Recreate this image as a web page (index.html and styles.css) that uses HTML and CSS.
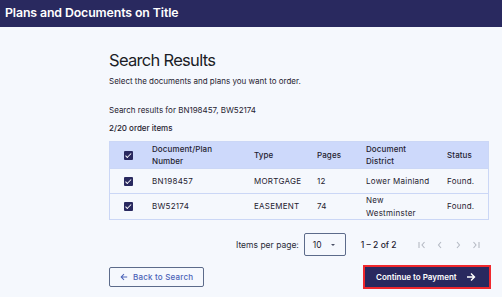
FILE: index.html
```html
<!DOCTYPE html>
<html>
<head>
  <title>Plans and Documents on Title</title>
  <meta charset="UTF-8">
  <link rel="stylesheet" href="styles.css">
</head>
<body>
  <div class="topbar">Plans and Documents on Title</div>

  <div class="container">
    <h1>Search Results</h1>
    <p class="subtitle">Select the documents and plans you want to order.</p>

    <p class="query">Search results for BN198457, BW52174</p>
    <p class="count">2/20 order items</p>

    <table class="results">
      <thead>
        <tr>
          <th class="col-check"><span class="checkbox"></span></th>
          <th class="col-doc">Document/Plan<br>Number</th>
          <th class="col-type">Type</th>
          <th class="col-pages">Pages</th>
          <th class="col-district">Document<br>District</th>
          <th class="col-status">Status</th>
        </tr>
      </thead>
      <tbody>
        <tr>
          <td class="col-check"><span class="checkbox"></span></td>
          <td>BN198457</td>
          <td>MORTGAGE</td>
          <td>12</td>
          <td>Lower Mainland</td>
          <td>Found.</td>
        </tr>
        <tr>
          <td class="col-check"><span class="checkbox"></span></td>
          <td>BW52174</td>
          <td>EASEMENT</td>
          <td>74</td>
          <td>New<br>Westminster</td>
          <td>Found.</td>
        </tr>
      </tbody>
    </table>

    <div class="paginator">
      <span class="per-page">Items per page:</span>
      <div class="select">
        <span>10</span>
        <span class="caret"></span>
      </div>
      <span class="range">1 – 2 of 2</span>
      <div class="pager-icons">
        <svg width="10" height="10" viewBox="0 0 10 10" fill="none" stroke="#b5bac4" stroke-width="1.1"><path d="M2 2v6M7.5 2L5 5l2.5 3"/></svg>
        <svg width="10" height="10" viewBox="0 0 10 10" fill="none" stroke="#b5bac4" stroke-width="1.1"><path d="M6 2L3.5 5 6 8"/></svg>
        <svg width="10" height="10" viewBox="0 0 10 10" fill="none" stroke="#b5bac4" stroke-width="1.1"><path d="M4 2l2.5 3L4 8"/></svg>
        <svg width="10" height="10" viewBox="0 0 10 10" fill="none" stroke="#b5bac4" stroke-width="1.1"><path d="M2.5 2L5 5 2.5 8M8 2v6"/></svg>
      </div>
    </div>

    <div class="actions">
      <button class="btn-back">
        <svg width="8" height="8" viewBox="0 0 10 10" fill="none" stroke="currentColor" stroke-width="1.3"><path d="M9 5H1.5M5 1.5L1.5 5 5 8.5"/></svg>
        Back to Search
      </button>
      <button class="btn-continue">
        Continue to Payment
        <svg width="10" height="10" viewBox="0 0 10 10" fill="none" stroke="currentColor" stroke-width="1.4"><path d="M1 5h7.5M5 1.5L8.5 5 5 8.5"/></svg>
      </button>
    </div>
  </div>
</body>
</html>
```

FILE: styles.css
```css
body {
  font-family: Inter, "Noto Sans", sans-serif;
  margin: 0;
  padding: 0;
  background-color: #f5f8fd;
  color: #1f2230;
}

.topbar {
  height: 27px;
  line-height: 26px;
  background-color: #29295f;
  color: #ffffff;
  font-size: 12.3px;
  font-weight: 600;
  padding-left: 5px;
  letter-spacing: -0.1px;
}

.container {
  width: 380px;
  margin-left: 109px;
  padding-top: 23px;
}

h1 {
  margin: 0;
  font-size: 16.5px;
  font-weight: 400;
  line-height: 21px;
  letter-spacing: -0.7px;
  color: #1b1d26;
}

.subtitle {
  margin: 4px 0 0;
  font-size: 8px;
  line-height: 12px;
}

.query {
  margin: 17px 0 0;
  font-size: 8px;
  line-height: 12px;
}

.count {
  margin: 6px 0 0;
  font-size: 8px;
  line-height: 12px;
  font-weight: 500;
}

.results {
  margin-top: 7px;
  width: 380px;
  border-collapse: collapse;
  border: 1px solid #cbd7f6;
  font-size: 8px;
}

.results th {
  background-color: #cdd9fb;
  font-weight: 500;
  text-align: left;
  height: 26px;
  padding: 0;
  line-height: 12.5px;
  letter-spacing: 0.1px;
}

.results td {
  height: 24px;
  padding: 0;
  line-height: 12.5px;
  border-top: 1px solid #cbd7f6;
  letter-spacing: 0.25px;
}

.results .col-check {
  width: 28px;
  padding-left: 14px;
}

.col-doc { width: 102px; }
.col-type { width: 63px; }
.col-pages { width: 49px; }
.col-district { width: 81px; }

.checkbox {
  display: block;
  width: 9px;
  height: 9px;
  background-color: #29295f;
  border-radius: 1px;
  position: relative;
}

.checkbox:after {
  content: "";
  position: absolute;
  left: 3px;
  top: 1px;
  width: 2px;
  height: 4.5px;
  border: solid #ffffff;
  border-width: 0 1px 1px 0;
  transform: rotate(45deg);
}

.paginator {
  display: flex;
  align-items: center;
  margin-top: 13px;
  padding-left: 127px;
  font-size: 8.5px;
}

.per-page {
  color: #2a2c3a;
}

.select {
  display: flex;
  align-items: center;
  justify-content: space-between;
  box-sizing: border-box;
  width: 42px;
  height: 23px;
  margin-left: 5px;
  padding: 0 10px 0 8px;
  border: 1px solid #5c6b8a;
  border-radius: 2px;
}

.caret {
  width: 0;
  height: 0;
  border-left: 2.5px solid transparent;
  border-right: 2.5px solid transparent;
  border-top: 2.5px solid #4a5066;
}

.range {
  margin-left: 15px;
  font-weight: 500;
}

.pager-icons {
  display: flex;
  gap: 8px;
  margin-left: 20px;
}

.actions {
  display: flex;
  justify-content: space-between;
  align-items: center;
  margin-top: 9px;
}

.btn-back {
  display: flex;
  align-items: center;
  gap: 5px;
  width: 95px;
  height: 20px;
  box-sizing: border-box;
  padding: 0 0 0 10px;
  background-color: transparent;
  border: 1px solid #5c6b8a;
  border-radius: 2px;
  color: #4b63b8;
  font-family: inherit;
  font-size: 8px;
  font-weight: 500;
  letter-spacing: 0.2px;
}

.btn-continue {
  display: flex;
  align-items: center;
  gap: 9px;
  width: 128px;
  height: 24px;
  box-sizing: border-box;
  margin-right: -2px;
  padding: 0 0 0 11px;
  background-color: #29295f;
  border: 2px solid #f0282d;
  color: #ffffff;
  font-family: inherit;
  font-size: 8px;
  font-weight: 600;
}
```
